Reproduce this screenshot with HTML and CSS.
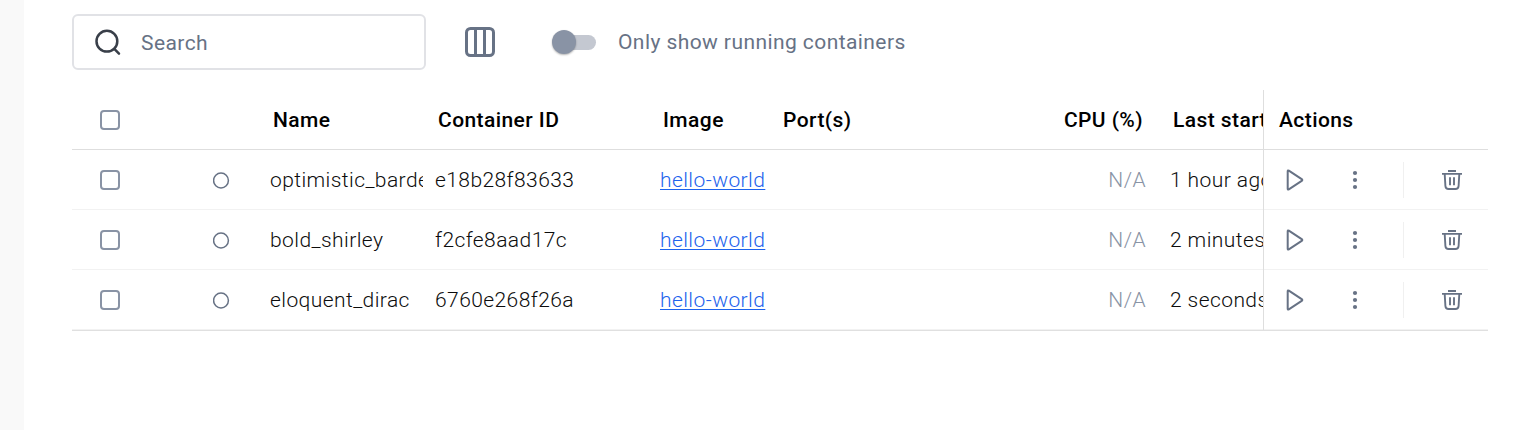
FILE: index.html
```html
<!DOCTYPE html>
<html lang="en">
<head>
<meta charset="utf-8">
<title>Containers</title>
<link rel="stylesheet" href="styles.css">
</head>
<body>
<svg class="defs" width="0" height="0" aria-hidden="true">
  <symbol id="play" viewBox="0 0 30 30"><path d="M8.700 6.300v17.400q0 1.300 1.100.6l12.900-8.500q1.200-.8 0-1.600L9.800 5.700Q8.700 5 8.700 6.300z" fill="none" stroke="currentColor" stroke-width="2" stroke-linejoin="round"/></symbol>
  <symbol id="more" viewBox="0 0 30 30"><g fill="currentColor"><circle cx="15" cy="8" r="2.100"/><circle cx="15" cy="15" r="2.100"/><circle cx="15" cy="22" r="2.100"/></g></symbol>
  <symbol id="trash" viewBox="0 0 30 30"><path d="M11 6h8M5 8.900h20M7.700 9l.7 12q.2 3 3.200 3h6.800q3 0 3.200-3L22.300 9M13 12.300v8M17 12.300v8" fill="none" stroke="currentColor" stroke-width="1.900"/></symbol>
  <symbol id="stopped" viewBox="0 0 17 17"><circle cx="8" cy="8.500" r="7.400" fill="none" stroke="currentColor" stroke-width="1.500"/></symbol>
</svg>
<div class="app">
  <aside class="rail"></aside>
  <main class="content">
    <div class="toolbar">
      <label class="search">
        <svg class="search-icon" viewBox="0 0 30 30"><circle cx="12.900" cy="13.200" r="10.400"/><path d="M20.300 20.800l4.700 4.800"/></svg>
        <span>Search</span>
      </label>
      <svg class="columns-icon" viewBox="0 0 30 30"><rect x="1.500" y="1.500" width="27" height="27" rx="4"/><path d="M10.500 1.500v27M19.500 1.500v27"/></svg>
      <span class="switch"><span class="knob"></span></span>
      <span class="switch-label">Only show running containers</span>
    </div>
    <div class="table">
      <div class="row head">
        <span class="check"></span><span></span>
        <span class="cell">Name</span><span class="cell">Container ID</span><span class="cell">Image</span><span class="cell">Port(s)</span><span class="cell cpu">CPU (%)</span><span class="cell last">Last started</span>
        <span class="actions">Actions</span>
      </div>
      <div class="row">
        <span class="check"></span><svg class="status"><use href="#stopped"/></svg>
        <span class="cell">optimistic_bardeen</span><span class="cell">e18b28f83633</span><span class="cell"><a>hello-world</a></span><span></span><span class="cell cpu">N/A</span><span class="cell last">1 hour ago</span>
        <span class="actions"><svg><use href="#play"/></svg><svg><use href="#more"/></svg><i class="divider"></i><svg><use href="#trash"/></svg></span>
      </div>
      <div class="row">
        <span class="check"></span><svg class="status"><use href="#stopped"/></svg>
        <span class="cell">bold_shirley</span><span class="cell">f2cfe8aad17c</span><span class="cell"><a>hello-world</a></span><span></span><span class="cell cpu">N/A</span><span class="cell last">2 minutes ago</span>
        <span class="actions"><svg><use href="#play"/></svg><svg><use href="#more"/></svg><i class="divider"></i><svg><use href="#trash"/></svg></span>
      </div>
      <div class="row">
        <span class="check"></span><svg class="status"><use href="#stopped"/></svg>
        <span class="cell">eloquent_dirac</span><span class="cell">6760e268f26a</span><span class="cell"><a>hello-world</a></span><span></span><span class="cell cpu">N/A</span><span class="cell last">2 seconds ago</span>
        <span class="actions"><svg><use href="#play"/></svg><svg><use href="#more"/></svg><i class="divider"></i><svg><use href="#trash"/></svg></span>
      </div>
    </div>
  </main>
</div>
</body>
</html>
```
FILE: styles.css
```css
* { box-sizing: border-box; }
body {
  margin: 0;
  font: 400 21px/30px Roboto, "Liberation Sans", sans-serif;
  background: #fff;
  color: #000;
}
.defs { display: block; height: 0; }
.app { display: flex; height: 430px; overflow: hidden; }
.rail { width: 24px; background: #f9f9f9; }
.content { flex: 1; padding: 14px 31px 0 48px; }
.toolbar {
  display: flex;
  align-items: center;
  height: 56px;
  color: #677285;
  letter-spacing: .42px;
}
.search {
  display: flex;
  align-items: center;
  width: 354px;
  height: 56px;
  padding: 1px 0 0 20px;
  border: 2px solid #e1e2e6;
  border-radius: 6px;
}
.search-icon {
  width: 30px;
  height: 30px;
  margin-right: 17px;
  fill: none;
  stroke: #393f49;
  stroke-width: 2.5;
  stroke-linecap: round;
}
.columns-icon {
  width: 30px;
  height: 30px;
  margin-left: 39px;
  fill: none;
  stroke: #677285;
  stroke-width: 3;
}
.switch {
  display: flex;
  align-items: center;
  width: 39px;
  height: 15px;
  margin-left: 62px;
  border-radius: 8px;
  background: #c4c8d1;
}
.knob {
  flex: none;
  width: 24px;
  height: 24px;
  margin-left: -5px;
  border-radius: 50%;
  background: #8993a5;
  box-shadow: 0 1px 2px rgba(0, 0, 0, .3);
}
.switch-label { margin-left: 22px; }
.table { margin-top: 20px; border-bottom: 1px solid #e0e0e0; }
.row {
  display: grid;
  grid-template-columns: 128px 70px 153px 12px 225px 120px 270px 96px 24px 93px 225px;
  align-items: center;
  height: 60px;
  border-bottom: 1px solid #f2f2f2;
  font-weight: 300;
  letter-spacing: .42px;
}
.row > :nth-child(4) { grid-column: 5; }
.row > :nth-child(7) { grid-column: 8; }
.row > :nth-child(8) { grid-column: 10; }
.row > :nth-child(9) { grid-column: 11; }
.cell { overflow: hidden; white-space: nowrap; color: #0c0c0c; }
.cell.cpu { color: #8993a5; text-align: right; }
.head { border-color: #dedede; font-weight: 500; }
.head .cell { padding-left: 3px; color: #000; }
.head .cell.cpu { color: #000; padding: 0 3px 0 0; }
.check {
  width: 20px;
  height: 20px;
  margin-left: 28px;
  border: 2px solid #8993a5;
  border-radius: 4px;
}
.status {
  width: 17px;
  height: 17px;
  margin: 1px 0 0 13px;
  color: #677285;
}
.row a { color: #1d63ed; text-decoration: underline; text-decoration-thickness: 1px; text-underline-offset: 2px; }
.actions {
  display: flex;
  align-items: center;
  height: 60px;
  padding-left: 15px;
  border-left: 1px solid #dedede;
  color: #677285;
}
.head .actions { color: #000; }
.actions svg { flex: none; width: 30px; height: 30px; }
.actions svg + svg { margin-left: 31px; }
.divider { width: 1px; height: 36px; margin: 0 33px; background: #f0f0f0; }
```
